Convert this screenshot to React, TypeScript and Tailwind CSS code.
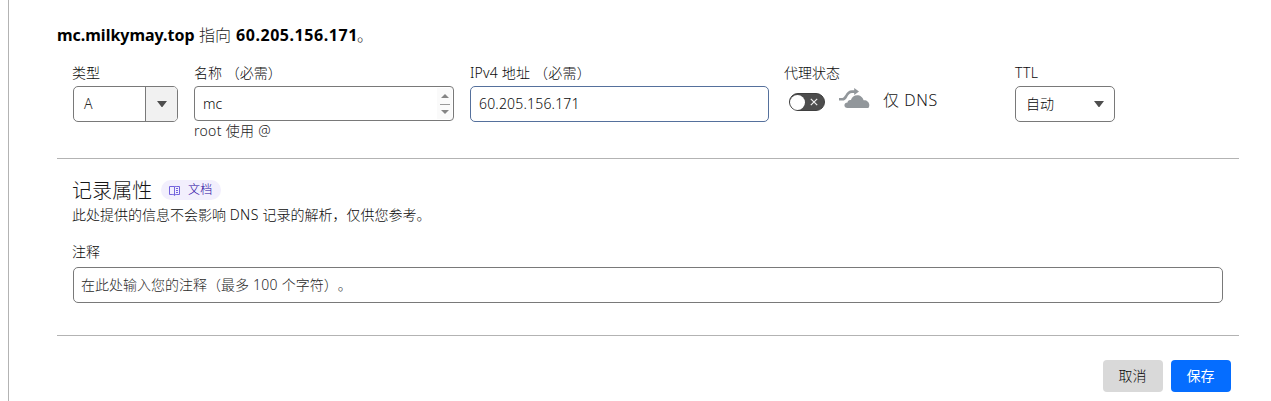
import React from "react";

function Caret() {
  return (
    <svg width="10" height="6" viewBox="0 0 10 6" className="shrink-0">
      <path d="M0 0h10L5.8 5.4a1 1 0 0 1-1.6 0z" fill="#4e4e4e" />
    </svg>
  );
}

function Label({ children }: { children: React.ReactNode }) {
  return <div className="mt-[3px] h-5 whitespace-pre text-sm leading-5 text-[#0a0a0a]">{children}</div>;
}

function ProxyToggle() {
  return (
    <div className="flex h-[18px] w-9 items-center justify-between rounded-full border border-[#3f3f3f] bg-[#4d4d4d] pr-[6px]">
      <span className="h-[15px] w-[15px] rounded-full bg-white" />
      <svg width="8" height="8" viewBox="0 0 8 8">
        <path d="M.8.8l6.4 6.4M7.2.8L.8 7.2" stroke="#eee" strokeWidth="1.2" />
      </svg>
    </div>
  );
}

function CloudBypass() {
  return (
    <svg width="31" height="21" viewBox="0 0 31 21">
      <path
        d="M8.5 20C6.500 20 5.400 18.900 5.400 17.300C5.400 15.600 6.700 14.500 8.500 14.500C8.600 12.600 10.200 11.500 11.900 12C12.900 9.200 15.200 7.200 18.200 7.200C21.300 7.200 23.900 9.300 24.600 12.300C27.700 12 30.300 14.200 30.300 17C30.300 18.400 29.900 19.300 29.300 20Z"
        fill="#92979b"
      />
      <path
        d="M0 11.200H3.500C5.200 11.200 6 10.300 7 8.500C8.500 5.400 9.900 3.600 13 3.600H16"
        fill="none"
        stroke="#92979b"
        strokeWidth="2.600"
      />
      <path d="M15.200 0L20 3.500L15.200 6.900Z" fill="#92979b" />
    </svg>
  );
}

function BookIcon() {
  return (
    <svg width="11" height="11" viewBox="0 0 11 11" fill="none" stroke="#7363dd" strokeWidth="1">
      <path d="M5.500 1.500H.5v8h3.300c.9 0 1.400.3 1.700.8M5.500 1.500v8.800c.3-.5.800-.8 1.700-.8h3.300v-8H7.200c-.9 0-1.400 0-1.700.3" />
      <path d="M7 3.500h2M7 5.500h2M7 7.500h2" />
    </svg>
  );
}

export default function App() {
  return (
    <div className="h-[401px] w-[1271px] overflow-hidden bg-white pl-2 font-['Noto_Sans','Noto_Sans_CJK_SC',sans-serif] font-light [text-spacing-trim:space-all]">
      <div className="h-full border-l border-[#b3b3b3] pl-12 pr-8">
        <div className="flex h-[60px] items-center whitespace-nowrap pt-[10px] text-base text-[#1f1f1f]">
          <b className="w-[137px] font-bold tracking-[-0.02px] text-black">mc.milkymay.top</b>
          <span className="ml-[5px] w-8">指向</span>
          <b className="ml-[5px] w-[121px] font-bold tracking-[0.55px] text-black">60.205.156.171</b>
          <span>。</span>
        </div>

        <div className="flex h-[98px] px-4">
          <div className="w-[105px]">
            <Label><span className="-ml-px">类型</span></Label>
            <div className="mt-[3px] flex h-9 overflow-hidden rounded-[5px] border border-[#797979]">
              <div className="flex flex-1 items-center pl-[10px] text-sm text-[#2a2a2a]">A</div>
              <div className="flex w-8 items-center justify-center border-l border-[#797979] bg-[#f1f1f1]">
                <Caret />
              </div>
            </div>
          </div>

          <div className="ml-4 w-[260px]">
            <Label>名称 （必需）</Label>
            <div className="mt-[3px] flex h-[35px] items-center justify-between rounded-[4px] border border-[#797979] pl-2 pr-px text-sm text-[#0a0a0a]">
              <span>mc</span>
              <span className="flex h-[31px] w-[15px] items-center justify-center bg-[#fafafa]">
                <svg width="10" height="22" viewBox="0 0 10 22">
                  <path d="M1 5L5 1l4 4zM1 17h8l-4 4z" fill="#858585" />
                  <path d="M0 11.5h10" stroke="#999" />
                </svg>
              </span>
            </div>
            <div className="h-5 text-sm leading-5 tracking-[0.3px] text-[#222]">root 使用 @</div>
          </div>

          <div className="ml-4 w-[299px]">
            <Label><span className="tracking-[0.2px]">IPv4 地址 （必需）</span></Label>
            <div className="mt-[3px] flex h-9 items-center rounded-[5px] border border-[#55709c] pl-2 text-sm tracking-[0.18px] text-[#0a0a0a]">
              60.205.156.171
            </div>
          </div>

          <div className="ml-4 w-[230px]">
            <Label><span className="-ml-px">代理状态</span></Label>
            <div className="mt-[3px] flex items-start pl-1">
              <div className="mt-[7px]"><ProxyToggle /></div>
              <div className="ml-[14px] mt-[2px]"><CloudBypass /></div>
              <span className="ml-[13px] mt-[2px] text-base leading-6 tracking-[0.6px] text-[#151515]">仅 DNS</span>
            </div>
          </div>

          <div className="w-[100px]">
            <Label><span className="tracking-[0.3px]">TTL</span></Label>
            <div className="mt-[3px] flex h-9 items-center justify-between rounded-[5px] border border-[#797979] pl-[10px] pr-[10px] text-sm text-[#0a0a0a]">
              <span>自动</span>
              <Caret />
            </div>
          </div>
        </div>

        <div className="h-[178px] border-b border-t border-[#b3b3b3] pl-[15px] pr-4 pt-[17px]">
          <div className="flex h-7 items-center">
            <h2 className="w-20 whitespace-nowrap pt-px text-xl font-light leading-7 tracking-[0.1px] text-[#151515]">记录属性</h2>
            <span className="ml-[9px] flex h-5 w-[60px] items-center rounded-full bg-[#f2effd] pl-2 text-xs text-[#2504a0]">
              <BookIcon />
              <span className="ml-2 tracking-[0.3px]">文档</span>
            </span>
          </div>
          <div className="mt-px h-5 whitespace-nowrap text-sm leading-5 text-[#0a0a0a]">
            此处提供的信息不会影响 <span className="tracking-[0.5px]">DNS</span> 记录的解析，仅供您参考。
          </div>
          <div className="mt-[17px] h-5 text-sm leading-5 text-[#0a0a0a]">注释</div>
          <div className="ml-px mt-[5px] flex h-9 items-center whitespace-pre rounded-[5px] border border-[#797979] pl-[7px] text-sm text-[#2a2a2a]">
            在此处输入您的注释（最多<span className="tracking-[0.3px]"> 100 </span>个字符）。
          </div>
        </div>

        <div className="flex justify-end gap-2 pr-2 pt-6 text-sm">
          <button className="h-8 w-[60px] rounded-[4px] bg-[#d9d9d9] pr-[1px] text-[#0a0a0a]">取消</button>
          <button className="h-8 w-[60px] rounded-[4px] bg-[#056dff] pr-[1px] font-normal text-white">保存</button>
        </div>
      </div>
    </div>
  );
}
